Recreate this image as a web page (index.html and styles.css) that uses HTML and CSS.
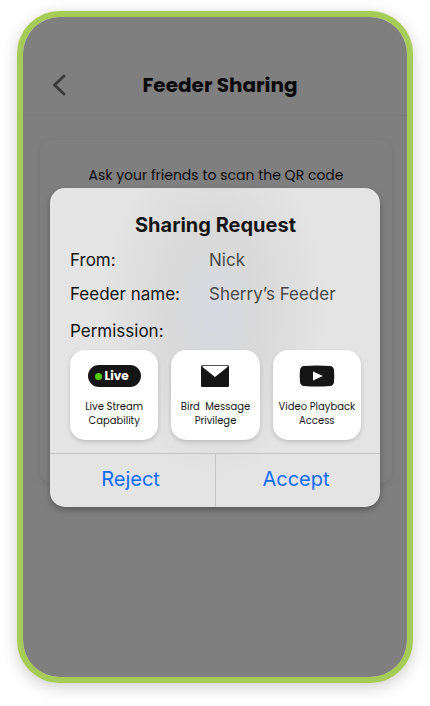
FILE: index.html
```html
<!DOCTYPE html>
<html lang="en">
<head>
<meta charset="utf-8">
<meta name="viewport" content="width=device-width, initial-scale=1">
<title>Feeder Sharing</title>
<link rel="stylesheet" href="styles.css">
</head>
<body>
<main class="phone">
  <header class="topbar">
    <button class="back" type="button" aria-label="Back">
      <svg width="14" height="22" viewBox="0 0 14 22" fill="none" stroke="#747474" stroke-width="3" stroke-linecap="round" stroke-linejoin="round"><path d="M12 2 2.500 11l9.500 9"/></svg>
    </button>
    <h1 class="topbar-title">Feeder Sharing</h1>
  </header>
  <section class="qr-card">
    <p class="qr-text">Ask your friends to scan the QR code</p>
  </section>
  <div class="overlay">
    <section class="dialog" role="dialog" aria-labelledby="dialog-title">
      <div class="dialog-body">
        <h2 class="dialog-title" id="dialog-title">Sharing Request</h2>
        <dl class="details">
          <dt>From:</dt><dd>Nick</dd>
          <dt>Feeder name:</dt><dd>Sherry’s Feeder</dd>
        </dl>
        <h3 class="permission-title">Permission:</h3>
        <ul class="permissions">
          <li class="permission">
            <span class="permission-icon"><span class="live">Live</span></span>
            <span>Live Stream<br>Capability</span>
          </li>
          <li class="permission">
            <span class="permission-icon">
              <svg width="28" height="24" viewBox="0 0 28 24"><rect x="0" y="1" width="28" height="22" rx="1.500" fill="#151515"/><path d="M1.500 2h25v1L14 13 1.500 3z" fill="#fff"/><path d="M1 1.500h26" stroke="#555" stroke-width="1"/></svg>
            </span>
            <span class="wide-gap">Bird  Message<br>Privilege</span>
          </li>
          <li class="permission">
            <span class="permission-icon">
              <svg width="36" height="22" viewBox="0 0 36 22"><path d="M5 1Q18 0 31 1q3.500.3 4 4 .6 6 0 12-.5 3.700-4 4-13 1-26 0-3.500-.3-4-4-.6-6 0-12 .5-3.700 4-4z" fill="#151515"/><path d="M14 6.500v9l10-4.500z" fill="#fff"/></svg>
            </span>
            <span>Video Playback<br>Access</span>
          </li>
        </ul>
      </div>
      <footer class="actions">
        <button class="action" type="button">Reject</button>
        <button class="action" type="button">Accept</button>
      </footer>
    </section>
  </div>
</main>
</body>
</html>
```
FILE: styles.css
```css
* {
  box-sizing: border-box;
}

body {
  margin: 0;
  padding: 11px 17px 23px;
  min-height: 100vh;
  display: flex;
  background: #fff;
  color: #151515;
  font-family: Inter, "Liberation Sans", sans-serif;
}

h1, h2, h3, p, dl, dd, ul {
  margin: 0;
  padding: 0;
}

button {
  border: 0;
  padding: 0;
  background: none;
  font: inherit;
}

.phone {
  position: relative;
  flex: 1;
  border: 6px solid #a7cb57;
  border-radius: 43px;
  background: #fff;
  overflow: hidden;
  box-shadow: 0 4px 16px rgba(0, 0, 0, 0.2);
}

.topbar {
  display: grid;
  grid-template-columns: 48px 1fr 38px;
  align-items: center;
  height: 99px;
  padding-top: 37px;
  border-bottom: 1px solid #f5f5f5;
}

.back {
  display: flex;
  justify-content: flex-end;
  padding-right: 5px;
}

.topbar-title {
  text-align: center;
  font: 700 20px/32px Poppins, Inter, sans-serif;
}

.qr-card {
  min-height: 343px;
  margin: 24px 15px 0 17px;
  padding: 23px 16px;
  border-radius: 12px;
  background: #fff;
  box-shadow: 0 2px 8px rgba(0, 0, 0, 0.1);
}

.qr-text {
  text-align: center;
  white-space: nowrap;
  font: 400 14px/24px Poppins, "Open Sans", sans-serif;
}

.overlay {
  position: absolute;
  inset: 0;
  padding: 171px 27px;
  background: rgba(0, 0, 0, 0.5);
}

.dialog {
  border-radius: 15px;
  background: radial-gradient(ellipse 110px 170px at 50% 38%, #d6dae3 0%, #d9d9da 35%, #dbdbdb 55%, #e4e4e4 100%);
  box-shadow: 0 3px 6px rgba(0, 0, 0, 0.3);
}

.dialog-body {
  padding: 23px 19px 13px 20px;
}

.dialog-title {
  text-align: center;
  font-size: 20px;
  line-height: 28px;
  font-weight: 700;
}

.details {
  display: grid;
  grid-template-columns: 139px 1fr;
  row-gap: 10px;
  margin-top: 9px;
  font-size: 17px;
  line-height: 24px;
}

.details dd {
  color: #4a4a4a;
}

.permission-title {
  margin-top: 13px;
  font-size: 17px;
  line-height: 24px;
  font-weight: 400;
}

.permissions {
  display: grid;
  grid-template-columns: repeat(3, 1fr);
  gap: 13px;
  margin-top: 7px;
  list-style: none;
}

.permission {
  display: flex;
  flex-direction: column;
  align-items: center;
  height: 90px;
  padding-top: 14px;
  border-radius: 15px;
  background: #fff;
  box-shadow: 0 2px 4px rgba(0, 0, 0, 0.16);
  text-align: center;
  white-space: nowrap;
  font: 400 10px/14px Poppins, "Open Sans", sans-serif;
}

.permission-icon {
  display: flex;
  align-items: center;
  height: 24px;
  margin-bottom: 12px;
}

.wide-gap {
  white-space: pre;
}

.live {
  display: flex;
  align-items: center;
  gap: 3px;
  height: 22px;
  padding: 0 12px 0 7px;
  border-radius: 11px;
  background: #151515;
  color: #fff;
  font: 700 12px/22px Poppins, Inter, sans-serif;
}

.live::before {
  content: "";
  width: 7px;
  height: 7px;
  border-radius: 50%;
  background: #55cc00;
}

.actions {
  display: grid;
  grid-template-columns: 1fr 1fr;
  border-top: 1px solid #c4c4c4;
}

.action {
  height: 53px;
  padding: 0 4px 3px 0;
  color: #0a6cff;
  font-size: 20px;
}

.action + .action {
  border-left: 1px solid #c4c4c4;
}
```
